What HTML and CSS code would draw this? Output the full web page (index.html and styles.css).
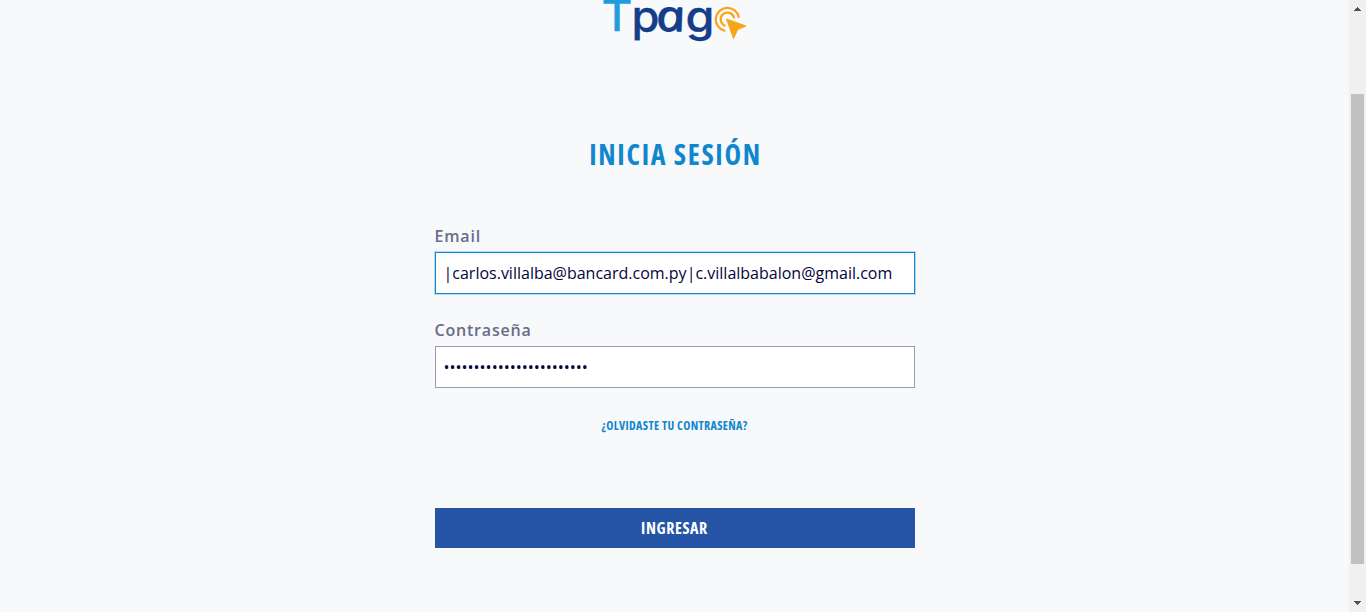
FILE: index.html
```
<!DOCTYPE html>
<html lang="es">
<head>
<meta charset="utf-8">
<title>Tpago</title>
<link rel="stylesheet" href="styles.css">
</head>
<body>
<main class="page">
  <svg class="logo" width="146" height="50" viewBox="602 0 146 50" role="img" aria-label="Tpago">
    <text class="logo-t" x="601.5" y="30.5" textLength="31" lengthAdjust="spacingAndGlyphs">T</text>
    <text class="logo-word" x="631.5" y="31.5" textLength="28" lengthAdjust="spacingAndGlyphs">p</text>
    <text class="logo-word logo-a" transform="translate(658.5 31) skewX(12)" textLength="29" lengthAdjust="spacingAndGlyphs">a</text>
    <text class="logo-word" x="685.5" y="31.5" textLength="29" lengthAdjust="spacingAndGlyphs">g</text>
    <g fill="none" stroke="#f9a51a" stroke-width="2.2" stroke-linecap="round">
      <path d="M724.5 30.7A11.6 11.6 0 1 1 738.7 17"/>
      <path d="M724.5 25.5A6.8 6.8 0 1 1 734 17.5"/>
    </g>
    <path fill="#f9a51a" stroke="#f9a51a" stroke-width="1" stroke-linejoin="round" d="M726.5 19 746 26 737.7 29.5 733.5 38.5Z"/>
  </svg>
  <h1 class="title">INICIA SESIÓN</h1>
  <form class="form">
    <label class="label" for="email">Email</label>
    <input class="field field-active" id="email" type="text" value="|carlos.villalba@bancard.com.py|c.villalbabalon@gmail.com">
    <label class="label" for="password">Contraseña</label>
    <input class="field" id="password" type="password" value="abcdefghijklmnopqrstuvwx">
    <a class="forgot" href="#">¿OLVIDASTE TU CONTRASEÑA?</a>
    <button class="submit" type="button">INGRESAR</button>
  </form>
</main>
<aside class="scrollbar" aria-hidden="true">
  <svg class="arrow" width="9" height="5" shape-rendering="crispEdges"><path d="M1 4h7v-1h-1v-1h-1v-1h-1v-1h-1v1h-1v1h-1v1h-1z"/></svg>
  <div class="thumb"></div>
  <svg class="arrow arrow-down" width="9" height="5" shape-rendering="crispEdges"><path d="M1 0h7v1h-1v1h-1v1h-1v1h-1v-1h-1v-1h-1v-1h-1z"/></svg>
</aside>
</body>
</html>
```
FILE: styles.css
```
* { box-sizing: border-box; }
body {
  margin: 0;
  height: 612px;
  overflow: hidden;
  display: flex;
  background: #f7f9fb;
  font-family: "Open Sans", sans-serif;
}
.page {
  flex: 1;
  display: flex;
  flex-direction: column;
  align-items: center;
}
.logo { display: block; }
.logo-t, .logo-word {
  font-family: Inter, sans-serif;
  font-size: 43px;
  stroke-linejoin: round;
}
.logo-t {
  fill: #1f9bde;
  stroke: #1f9bde;
  stroke-width: 0.6px;
  font-weight: 400;
}
.logo-word {
  fill: #153e8a;
  stroke: #153e8a;
  stroke-width: 0.3px;
  font-weight: 500;
}
.logo-a {
  font-family: "Open Sans", sans-serif;
  font-style: italic;
  stroke-width: 1.3px;
}
.title {
  margin: 84px 0 0;
  padding-left: 2px;
  height: 40px;
  line-height: 40px;
  font-size: 28px;
  font-weight: 700;
  font-stretch: 75%;
  letter-spacing: 1.68px;
  color: #0f86cd;
  white-space: nowrap;
}
.form {
  width: 480px;
  margin-top: 50px;
  display: flex;
  flex-direction: column;
}
.label {
  height: 28px;
  line-height: 24px;
  font-size: 16px;
  font-weight: 600;
  letter-spacing: 0.8px;
  color: #6b6b89;
}
.field {
  width: 480px;
  height: 42px;
  margin: 0 0 24px;
  padding: 0 8px;
  border: 1px solid #9a9ab0;
  border-radius: 0;
  outline: 0;
  background: #fff;
  color: #04043c;
  font-family: "Open Sans", sans-serif;
  font-size: 16px;
}
.field-active {
  border-color: #0f86cd;
  box-shadow: 0 0 0 1px #b5daef;
}
.forgot {
  margin-top: 4px;
  height: 20px;
  line-height: 20px;
  text-align: center;
  text-decoration: none;
  font-size: 12px;
  font-weight: 700;
  font-stretch: 75%;
  letter-spacing: 0.36px;
  color: #0f86cd;
  white-space: nowrap;
}
.submit {
  margin-top: 72px;
  height: 40px;
  padding: 0;
  border: 0;
  background: #2655a8;
  color: #fff;
  font-family: "Open Sans", sans-serif;
  font-size: 16px;
  font-weight: 700;
  font-stretch: 75%;
  letter-spacing: 0.6px;
}
.scrollbar {
  width: 17px;
  height: 612px;
  padding: 7px 2px 6px;
  display: flex;
  flex-direction: column;
  align-items: center;
  background: #f0f0f0;
}
.arrow { display: block; fill: #505050; }
.thumb {
  width: 13px;
  height: 470px;
  margin-top: 82px;
  background: #c1c1c1;
}
.arrow-down { margin-top: auto; }
```
